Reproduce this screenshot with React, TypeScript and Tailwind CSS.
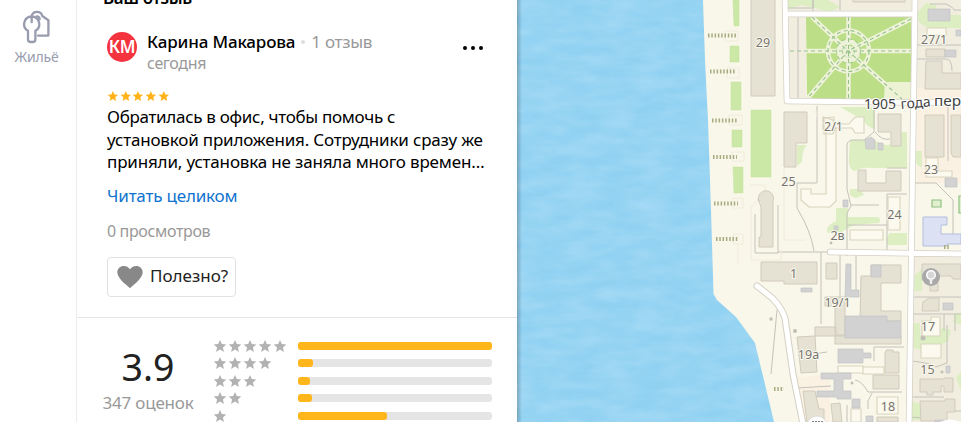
const STAR = 'M12 1.6l3.1 7.1 7.7.7-5.8 5.1 1.7 7.6L12 18.1l-6.7 4 1.7-7.6L1.2 9.4l7.7-.7z';

const ratings = [
  { stars: 5, width: 194 },
  { stars: 4, width: 15 },
  { stars: 3, width: 12 },
  { stars: 2, width: 14 },
  { stars: 1, width: 89 },
];

const Star = ({ className }: { className: string }) => (
  <svg className={className} viewBox="0 0 24 24" fill="currentColor">
    <path d={STAR} />
  </svg>
);

const Sidebar = () => (
  <nav className="w-[77px] shrink-0 border-r border-[#ececec] pt-[10px] flex flex-col items-center">
    <svg className="w-[30px] h-[34px] ml-[-3px]" viewBox="0 0 30 34" fill="none" stroke="#999cae" strokeWidth="2.3" strokeLinejoin="round" strokeLinecap="round">
      <path d="M9.800 5.300C10.600 3 12.600 1.800 15 1.800c2.700 0 4.700 1.600 5.300 4.200l6.100 4.300v15.300H16" />
      <path d="M9.700 6.500a7.600 7.600 0 0 0-3.700 14.200v8.500c0 1.600 1.300 2.800 2.800 2.800h1.800c1.600 0 2.800-1.200 2.800-2.800v-8.500A7.600 7.600 0 0 0 9.700 6.500z" />
      <path d="M9.700 7v5.200M14.800 6.300c1.900.1 2.900 1.300 2.900 3" />
    </svg>
    <span className="mt-[3px] mr-[3px] text-[14px] leading-[20px] tracking-[-0.2px] text-[#999cae] whitespace-nowrap">Жильё</span>
  </nav>
);

const Review = () => (
  <section className="h-[318px] shrink-0 border-b border-[#e4e4e4] pl-[30px] pr-[33px] overflow-hidden">
    <h2 className="h-[33px] -mt-[15px] -ml-[4px] text-[17px] leading-[26px] tracking-[-0.4px] font-semibold text-black">Ваш отзыв</h2>
    <div className="flex h-[66px] pt-[13px]">
      <div className="w-[30px] h-[30px] mt-px rounded-full bg-[#f5333f] flex items-center justify-center text-white text-[17px] font-semibold tracking-[-0.3px]">
        КМ
      </div>
      <div className="ml-[10px] flex-1 whitespace-nowrap">
        <div className="flex items-center h-[21px] text-[17px]">
          <span className="font-medium tracking-[-0.15px] text-black">Карина Макарова</span>
          <span className="w-[4px] h-[4px] mx-[6px] rounded-full bg-[#dedede]" />
          <span className="tracking-[-0.3px] text-[#999]">1 отзыв</span>
        </div>
        <div className="text-[16px] leading-[22px] tracking-[-0.35px] text-[#999]">сегодня</div>
      </div>
      <div className="flex gap-[4px] pt-[15px] pr-[1px]">
        <i className="w-[4px] h-[4px] rounded-full bg-black" />
        <i className="w-[4px] h-[4px] rounded-full bg-black" />
        <i className="w-[4px] h-[4px] rounded-full bg-black" />
      </div>
    </div>
    <div className="flex gap-[1px] h-[22px] pt-[6px] text-[#ffb319]">
      {[1, 2, 3, 4, 5].map((n) => (
        <Star key={n} className="w-[11.7px] h-[12px]" />
      ))}
    </div>
    <p className="text-[17px] leading-[22.500px] text-black whitespace-nowrap">
      <span className="block w-fit tracking-[-0.3px]">Обратилась в офис, чтобы помочь с</span>
      <span className="block w-fit tracking-[-0.18px]">установкой приложения. Сотрудники сразу же</span>
      <span className="block w-fit tracking-[-0.17px]">приняли, установка не заняла много времен…</span>
    </p>
    <a className="block mt-[10px] text-[17px] leading-[23px] tracking-[-0.18px] text-[#1173cf]">Читать целиком</a>
    <div className="mt-[13px] text-[16px] leading-[22px] tracking-[-0.35px] text-[#999]">0 просмотров</div>
    <button className="mt-[15px] w-[129px] h-[40px] border border-[#e2e2e2] rounded-[4px] flex items-center pl-[9px] whitespace-nowrap">
      <svg className="w-[26px] h-[24px]" viewBox="0 0 26 24" fill="#888">
        <path d="M13 23.200C8.500 19.200.3 13.100.3 7.300.3 3.600 3.200.9 6.800.9c2.500 0 4.800 1.200 6.200 3.300C14.400 2.100 16.700.9 19.200.9c3.600 0 6.500 2.700 6.500 6.400 0 5.800-8.200 11.900-12.700 15.900z" />
      </svg>
      <span className="ml-[7px] -mt-px text-[17px] text-[#222]">Полезно?</span>
    </button>
  </section>
);

const Summary = () => (
  <section className="flex pt-[19px]">
    <div className="w-[142px] shrink-0 flex flex-col items-center">
      <span className="mt-[6px] text-[37.500px] leading-[48px] text-[#222]">3.9</span>
      <span className="mt-[1px] text-[17px] leading-[22px] tracking-[-0.2px] text-[#999] whitespace-nowrap">347 оценок</span>
    </div>
    <div>
      {ratings.map((row) => (
        <div key={row.stars} className="flex items-center h-[17.500px]">
          <div className="flex w-[79px] gap-[1px] -ml-[6px] text-[#b2b2b2]">
            {Array.from({ length: row.stars }, (_, i) => (
              <Star key={i} className="w-[14px] h-[14px]" />
            ))}
          </div>
          <div className="w-[194px] h-[8px] ml-[6px] rounded-[3px] bg-[#e5e5e5]">
            <div className="h-[8px] rounded-[3px] bg-[#ffb61a]" style={{ width: row.width }} />
          </div>
        </div>
      ))}
    </div>
  </section>
);

const labels: [number, number, string][] = [
  [763, 47, '29'],
  [934, 44, '27/1'],
  [833.500, 131, '2/1'],
  [788.500, 186, '25'],
  [931, 174, '23'],
  [894.500, 219, '24'],
  [837.500, 240, '2в'],
  [793.500, 278, '1'],
  [837.500, 307, '19/1'],
  [808.500, 359, '19а'],
  [928, 331, '17'],
  [927.500, 374, '15'],
  [888, 411, '18'],
];

const CityMap = () => (
  <svg className="w-full h-full" viewBox="517 0 444 422" fontFamily="'Noto Sans', sans-serif">
    <defs>
      <filter id="water" x="0" y="0" width="1" height="1">
        <feTurbulence type="fractalNoise" baseFrequency="0.03 0.09" numOctaves="3" seed="4" />
        <feColorMatrix values="0 0 0 0 .66  0 0 0 0 .86  0 0 0 0 .96  .9 0 0 0 -.25" />
      </filter>
      <linearGradient id="edge">
        <stop stopColor="#000" stopOpacity=".22" />
        <stop offset="1" stopColor="#000" stopOpacity="0" />
      </linearGradient>
    </defs>
    <rect x="517" width="444" height="422" fill="#90d1f2" />
    <rect x="517" width="270" height="422" filter="url(#water)" opacity=".5" />
    <path d="M703 0L705 60 708 120 711 210 713.500 294 717 300 736 317 755 343 774 422H961V0z" fill="#f9f7e9" />

    {/* city blocks */}
    <g fill="#f1eee0">
      <path d="M787 0h127v12H787zM917 0h44v95h-44zM789 17h17v81h-17z" />
      <path d="M913 254h48v168h-52z" />
    </g>
    <path d="M917 88h44v95h-44zM785 372l17 5 28-3v48h-29l-8-48z" fill="#fbf1e2" />

    {/* grass */}
    <g fill="#ddefc2">
      <path d="M788 0h40l12 7-10 5-28-7-14 4zM918 12l8-9 10 2 3 10h22v13h-30q-10-2-13-8z" />
      <path d="M840 107h35v22q-9-2-11-9-12-6-24-13zM850 140h22l14 5 12-1 4-12h5v36h-32q-15-1-20 3-7-1-6-14z" />
      <path d="M797 145h10q-5 5-5 17l-5 4zM850 189h10l4 6-8 3q-8-1-6-9zM836 208h12v9l30 0q4 2 1 6l-25 2-14 8h-12q-4-6 8-12zM890 233h17v12h-20q-2-8 3-12z" />
      <path d="M915 151h7v16q-8 0-7-16zM915 275l7-6v22h-8zM914 323l6 0v12l21-1 0-6 10 2-3 12-22 6q-13 5-15-7zM910 400l12 5v15h-12zM955 313h6v12l-8-3zM956 377l5-4v18z" />
    </g>
    <g fill="#cce8a6" stroke="#c4e09f" strokeWidth=".5">
      <path d="M733 0h6v26h-5zM730 46h9v16h-9zM731 82h10v28h-10zM732 130h10v17h-10zM733 167h10v26h-9zM751 110h20v67h-20z" />
    </g>
    <path d="M806 17h105v82h-104z" fill="#bcde86" />
    <path d="M885 82h26v17h-27z" fill="#eef2d4" />

    {/* park alleys */}
    <g fill="none" stroke="#edf2d9" strokeWidth="4.500">
      <path d="M806 51h105M848.500 17v82M812 17l36 34-41 48M911 19l-63 32 54 48" />
      <circle cx="848.500" cy="51" r="20.500" />
      <circle cx="848.500" cy="51" r="9.500" strokeWidth="5" />
    </g>
    <g fill="none" stroke="#79b36e" strokeWidth="1.100" strokeDasharray="4 3" opacity=".75">
      <path d="M790 51h121M848.500 17v82M812 17l36 34-41 48M911 19l-63 32 54 48" />
      <circle cx="848.500" cy="51" r="20.500" />
      <circle cx="848.500" cy="51" r="12" opacity=".7" />
      <circle cx="848.500" cy="51" r="6" strokeDasharray="2 2" opacity=".7" />
    </g>

    {/* plot lines and paths */}
    <g fill="none" stroke="#c4c2bb" strokeWidth="1">
      <path d="M798 16v82M787 8h26V0M840 0v10M813 0v12M817 106v77h-20v25q14 23 17 43M755 214v39h23v-48M778 252h50" />
      <path d="M874 106v26l-10 8h-12q-6 1-5 9v40l4 17-4 7v43M851 205h28M847 225h40M887 250v-56h20M875 132q7 9 15 7M887 168h20M821 252v72M840 252v60M856 252v42" />
      <path d="M914 45h47M916 59h30q6 0 6 12M930 4h16q8 4 8 6h7M914 183h22l17 17v44M948 106v55M913 297h48M913 314h48M944 314v17M955 314v17M912 361q18 2 24 6l11-4V325M912 397h32M910 417l25 2 12-8h14M777 310l-6 64M797 388l34-2M814 354l13-2M855 380q7 1 13 12h34M868 409v-8l4-8M874 361v-14h30M847 405v17" />
    </g>
    <g fill="none" stroke="#f0ecdc" strokeWidth="1">
      <path d="M725 31h13v10h-13zM727 68h12v10h-12zM729 115h13v10h-13zM732 152h12v9h-12zM733 198h10v10h-10zM733 234h10v10h-10zM750 185h15v8l-14 14v53h30v-10M784 168v72h22M738 245v18M817 117v-5h-3" />
    </g>

    {/* buildings */}
    <g fill="#e5e2d4" stroke="#d0cbbb" strokeWidth="1">
      <path d="M751-1h24v97h-24zM784 112h23v31h-11v24h-12zM761 262h56v22h-33v-3h-23zM797 337l18-1 2 36-16 1z" />
      <path d="M759 201a7.500 7.500 0 1 1 14 0v46h-14v-10h2v-30l-3-8zM853-1h52v3h-52zM926 49h19v8h-19zM926 61h16v12h19v16h-36zM925 115h19v42h-19zM951 115h10v42h-8l-2-4zM878 114h23v32h-10v-14h-13zM858 170h8v13h20v-12h15v20h-43z" />
      <path d="M826 263h11v16h-11zM861 276h10v-11h30v18h-20v28h20v10h-41zM825 297h20v39h-10v-30h-10zM815 327h21v8h65v9h-66v-8h-20zM886 352v-2h7v2h6v21h-14v-21zM873 375h26v14h-26zM922 264h39v15h-8l-2-3h-13v15h-8v-11h-8zM923 302l6-4h10v13h-17zM920 379h24v-1h9v14h-9v-6h-3v6h-8v3h-6v-3h-7zM920 401h25v-2h10v13h-8v9h-26zM803 391h12l4 18h5v13h-17zM831 404l9-1 2 19h-9zM877 417h21v5h-21z" />
    </g>
    <g fill="#fcfaee" stroke="#d8d3bd" strokeWidth="1.100">
      <path d="M801 189v11l8 7h21l6-6V130l-3-10-10-3v12h3v65h-15v-5zM927 28h19v7h-19zM926 158h12v13h14v6h-26zM888 197h12v33h-12zM850 230h33v10h-33zM921 344h20v14h-20zM922 321h9v-4h9v19h-18zM838 366h25v7h-25zM863 367h21v7h-21zM877 397h21v17h-21zM851 409h10v13h-10zM824 118l10-1v7h15l6-7h9v16h-9l-3-5h-17l-2 6h-9z" />
    </g>
    <g fill="#d2d2d3" stroke="#c3c3c5" strokeWidth=".7">
      <path d="M928 9h22v12h-22zM956 30h5v6h-5zM945 50h11v7h-11zM945 178h12v9h-12zM865 140l6-3 4 3v9h-9zM878 143h5v7h-5zM843 200h5v7h-5zM834 226h4v4h-4zM871 265h10v12h-10zM846 264h5v26h8v7h-14zM801 288h11v4h-11zM845 316h42v5h14v17h-56zM838 349h25v4h8v5h-8v5h-25zM821 373h30v6h-8v12h8v8h-14v-2h-20v-6h17v-12h-13zM852 399h8v9h-8zM866 416h7v6h-7zM943 303h10v7h-10zM946 366h4v7h-4zM935 420h10v2h-10z" />
    </g>
    <path d="M923 217h24v8h-6v9h20v10h-14v2h-24z" fill="#dce1f3" stroke="#b3bedc" />
    <path d="M932 200h9v7h-9zM959 196h5v17h-5z" fill="#e1efce" stroke="#8fc082" strokeWidth="1.200" />

    {/* pier steps */}
    <g stroke="#a5ad80" strokeWidth="4" strokeDasharray="1.500 1.800">
      <path d="M708 35.500h28M710 71.500h26M712 120.500h26M713 157h24M714 203.500h24M716 239h22M774 389h10" />
      <path d="M909 246h6M944 247h6" />
    </g>

    {/* streets */}
    <g fill="none" strokeLinecap="round" strokeLinejoin="round">
      <g stroke="#d4d0c5">
        <path d="M785-3l2 104 175 2M787 14h127M915-3l-6 430M830 252l132 2" strokeWidth="6.500" />
        <path d="M757 286l9 7q14 10 19 25l8 56 10 50" strokeWidth="7" />
      </g>
      <g stroke="#fff">
        <path d="M785-3l2 104 175 2M787 14h127M915-3l-6 430M830 252l132 2" strokeWidth="5" />
        <path d="M757 286l9 7q14 10 19 25l8 56 10 50" strokeWidth="5" />
      </g>
    </g>

    <g fill="#c1bfb5">
      <circle cx="771" cy="319" r="1.700" />
      <circle cx="795" cy="331" r="2" />
      <circle cx="831" cy="243" r="1.400" />
      <circle cx="852" cy="383" r="1.500" />
      <circle cx="942" cy="372" r="1.500" />
      <circle cx="923" cy="338" r="2.500" />
    </g>

    {/* pins */}
    <circle cx="931" cy="277" r="9" fill="#a9a9a9" />
    <circle cx="931" cy="275" r="5" fill="#fff" />
    <circle cx="931" cy="275" r="3.500" fill="#d6d6d6" />
    <path d="M929.500 279h3l-.5 5h-2z" fill="#eee" />
    <circle cx="817" cy="426" r="10" fill="#fff" stroke="#ddd" />
    <path d="M813 421v3M816 421v3M819 421v3M822 421v3" stroke="#555" strokeWidth="1.500" />
    <path d="M940 422q10-5 21 0z" fill="#fff" />

    <g fontSize="12.500" fill="#77756f" stroke="#faf8ee" strokeWidth="2" paintOrder="stroke" textAnchor="middle">
      {labels.map(([x, y, text]) => (
        <text key={text} x={x} y={y}>{text}</text>
      ))}
    </g>
    <g fontSize="14" fill="#424242" stroke="#fff" strokeWidth="2" paintOrder="stroke">
      <text x="864" y="109">1905</text>
      <text x="901" y="109" textLength="30" lengthAdjust="spacingAndGlyphs" transform="rotate(-5 901 109)">года</text>
      <text x="934" y="106" textLength="27" lengthAdjust="spacingAndGlyphs">пер</text>
    </g>
    <rect x="517" width="5" height="422" fill="url(#edge)" />
  </svg>
);

const App = () => {
  return (
    <div className="flex w-[961px] h-[422px] overflow-hidden bg-white font-['Noto_Sans',sans-serif]">
      <Sidebar />
      <main className="w-[440px] shrink-0 flex flex-col overflow-hidden">
        <Review />
        <Summary />
      </main>
      <div className="w-[444px] shrink-0">
        <CityMap />
      </div>
    </div>
  );
};

export default App;
